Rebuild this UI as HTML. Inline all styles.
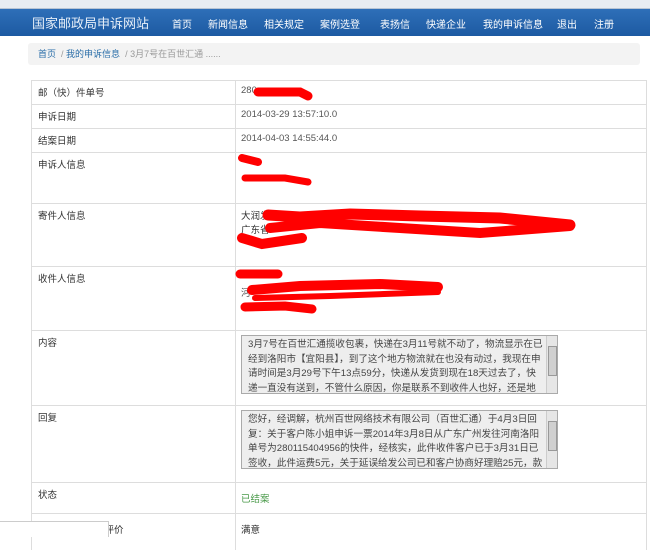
<!DOCTYPE html>
<html><head><meta charset="utf-8"><style>
body{margin:0;width:650px;height:536px;overflow:hidden;background:#fff;font-family:"Liberation Sans","Noto Sans CJK SC",sans-serif;font-size:10px;color:#333;position:relative}
.addr{position:absolute;left:0;top:0;width:650px;height:8px;background:#e8ecf2;border-bottom:1px solid #b8c4d4}
.nav{position:absolute;left:0;top:9px;width:650px;height:27px;background:linear-gradient(#2e6fb8,#1d5aa2);color:#fff}
.nav span{position:absolute;top:7px;font-size:10px}
.nav .logo{font-size:13px;top:4px;left:32px;color:#e6eef8}
.bc{position:absolute;left:28px;top:43px;width:612px;height:22px;background:#f3f3f3;border-radius:3px;font-size:9px;line-height:22px;color:#999}
.bc a{color:#2a6ea8}
.tb{position:absolute;left:31px;top:80px;width:614px;height:470px;border-left:1px solid #ddd;border-right:1px solid #ddd}
.r{position:absolute;left:0;width:614px;border-top:1px solid #ddd}
.k{position:absolute;left:6px;top:4px;font-size:9.5px}
.v{position:absolute;left:209px;top:4px;font-size:9.5px;color:#555}
.div{position:absolute;left:203px;top:0;width:1px;height:470px;background:#ddd}
.ta{position:absolute;left:209px;width:296px;height:55px;border:1px solid #aaa;background:#eee;padding:2px 13px 0 6px;font-size:9.6px;line-height:14.5px;color:#444;overflow:hidden}
.sb{position:absolute;right:0;top:0;width:10px;height:100%;background:#e6e6e6;border-left:1px solid #ccc}
.sb i{position:absolute;left:1px;top:10px;width:7px;height:28px;background:#d0d0d0;border:1px solid #999}
svg{position:absolute;left:0;top:0}
</style></head><body>
<div class="addr"></div>
<div class="nav"><span class="logo">国家邮政局申诉网站</span><span style="left:172px">首页</span><span style="left:208px">新闻信息</span><span style="left:264px">相关规定</span><span style="left:320px">案例选登</span><span style="left:380px">表扬信</span><span style="left:426px">快递企业</span><span style="left:483px">我的申诉信息</span><span style="left:557px">退出</span><span style="left:594px">注册</span></div>
<div class="bc">&nbsp;&nbsp;&nbsp;&nbsp;<a>首页</a> &nbsp;/ <a>我的申诉信息</a> &nbsp;/ 3月7号在百世汇通 ......</div>
<div class="tb">
<div class="div"></div>
<div class="r" style="top:0"><span class="k">邮（快）件单号</span><span class="v">280</span></div>
<div class="r" style="top:24px"><span class="k">申诉日期</span><span class="v">2014-03-29 13:57:10.0</span></div>
<div class="r" style="top:48px"><span class="k">结案日期</span><span class="v">2014-04-03 14:55:44.0</span></div>
<div class="r" style="top:72px"><span class="k">申诉人信息</span></div>
<div class="r" style="top:123px"><span class="k">寄件人信息</span><span class="v" style="color:#333">大润发<br>广东省</span></div>
<div class="r" style="top:186px"><span class="k">收件人信息</span><span class="v" style="top:18px">河</span></div>
<div class="r" style="top:250px"><span class="k">内容</span><div class="ta" style="top:4px">3月7号在百世汇通揽收包裹，快递在3月11号就不动了，物流显示在已经到洛阳市【宜阳县】，到了这个地方物流就在也没有动过，我现在申请时间是3月29号下午13点59分，快递从发货到现在18天过去了，快递一直没有送到，不管什么原因，你是联系不到收件人也好，还是地址不<div class="sb"><i></i></div></div></div>
<div class="r" style="top:325px"><span class="k">回复</span><div class="ta" style="top:4px">您好，经调解，杭州百世网络技术有限公司（百世汇通）于4月3日回复：关于客户陈小姐申诉一票2014年3月8日从广东广州发往河南洛阳单号为280115404956的快件，经核实，此件收件客户已于3月31日已签收，此件运费5元，关于延误给发公司已和客户协商好理赔25元，款项已<div class="sb"><i></i></div></div></div>
<div class="r" style="top:402px"><span class="k">状态</span><span class="v" style="color:#4a9a4a;top:8px">已结案</span></div>
<div class="r" style="top:433px"><span class="k" style="top:8px">您对企业答复的评价</span><span class="v" style="color:#333;top:8px">满意</span></div>
</div>
<div style="position:absolute;left:0;top:521px;width:108px;height:15px;background:#fff;border-top:1px solid #ccc;border-right:1px solid #ccc"></div>
<svg width="650" height="536"><g stroke="#f00" stroke-linecap="round" fill="none">
<path d="M258 92 L300 92 L308 96" stroke-width="9"/>
<path d="M242 158 L258 162" stroke-width="8"/>
<path d="M245 178 L285 178 L308 182" stroke-width="7"/>
<path d="M268 215 L300 217 L350 214 L420 216 L500 218 L570 225" stroke-width="11"/>
<path d="M270 228 L320 223 L400 228 L480 233 L570 226" stroke-width="10"/>
<path d="M242 238 L262 244 L302 238" stroke-width="10"/>
<path d="M240 274 L278 274" stroke-width="9"/>
<path d="M252 290 L300 286 L380 284 L438 287" stroke-width="10"/>
<path d="M255 298 L330 296 L438 292" stroke-width="6"/>
<path d="M245 307 L285 306 L312 309" stroke-width="9"/>
</g></svg>
</body></html>
